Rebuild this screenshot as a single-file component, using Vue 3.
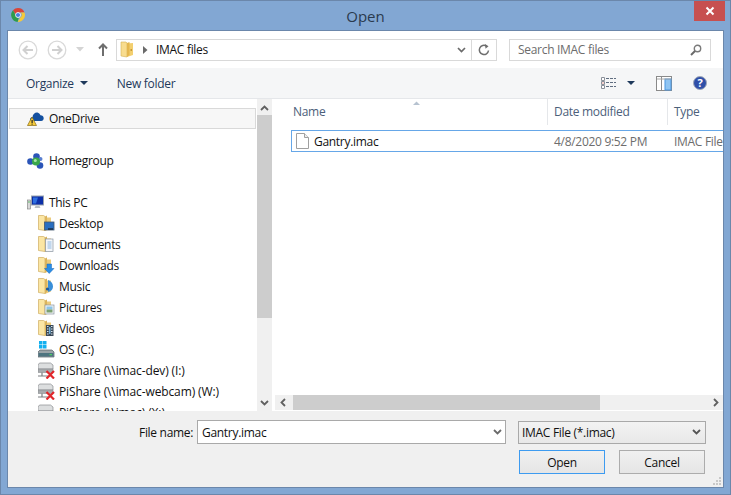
<template>
  <div class="window">
    <div class="titlebar">
      <svg class="chrome" width="16" height="16" viewBox="0 0 16 16">
        <path d="M8 1a7 7 0 0 1 6.500 4.400H8a2.700 2.700 0 0 0-2.600 2L3 3.300A7 7 0 0 1 8 1z" fill="#d8453a" />
        <path d="M14.500 5.400a7 7 0 0 1-6.900 9.600l3-4.800a2.800 2.800 0 0 0-.3-4.800z" fill="#f5c93a" />
        <path d="M7.600 15A7 7 0 0 1 3 3.300l2.600 4.800a2.700 2.700 0 0 0 3.200 2.500z" fill="#2f9c4c" />
        <circle cx="8" cy="8" r="2.700" fill="#fff" />
        <circle cx="8" cy="8" r="2.100" fill="#4a80e0" />
      </svg>
      <span class="title">Open</span>
      <div class="close">
        <svg width="10" height="10" viewBox="0 0 10 10"><path d="M1.500 1.500l7 7M8.500 1.500l-7 7" stroke="#fff" stroke-width="2" /></svg>
      </div>
    </div>

    <div class="client">
      <div class="navbar">
        <svg class="nav-btn" width="20" height="20" viewBox="0 0 20 20">
          <circle cx="10" cy="10" r="8.800" fill="none" stroke="#d9d9d9" stroke-width="1.300" />
          <path d="M15 10H6M9.500 6L5.500 10l4 4" fill="none" stroke="#d0d0d0" stroke-width="2" />
        </svg>
        <svg class="nav-btn" width="20" height="20" viewBox="0 0 20 20">
          <circle cx="10" cy="10" r="8.800" fill="none" stroke="#d9d9d9" stroke-width="1.300" />
          <path d="M5 10h9M10.500 6l4 4-4 4" fill="none" stroke="#d0d0d0" stroke-width="2" />
        </svg>
        <svg class="nav-caret" width="8" height="5" viewBox="0 0 8 5"><path d="M0 0h8L4 4.500z" fill="#d4d4d4" /></svg>
        <svg class="nav-up" width="10" height="13" viewBox="0 0 10 13">
          <path d="M5 13V2M1 5.500l4-4 4 4" fill="none" stroke="#6e6e6e" stroke-width="2" />
        </svg>
        <div class="address">
          <svg class="addr-folder" width="14" height="17" viewBox="0 0 14 17">
            <path d="M1 1h5l1 1v14l-6-1z" fill="#f8dc8e" stroke="#d5b256" stroke-width=".6" />
            <path d="M7 2.500l6-.5v12l-6 2z" fill="#f3cf6f" />
            <path d="M7 2l2.500-1v13L7 16z" fill="#e4b64e" />
            <rect x="10.500" y="8" width="1.500" height="2" fill="#c79a3a" />
          </svg>
          <svg class="addr-sep" width="5" height="8" viewBox="0 0 5 8"><path d="M0 0l4.500 4L0 8z" fill="#6a6a6a" /></svg>
          <span class="addr-text">IMAC files</span>
          <svg class="addr-drop" width="9" height="6" viewBox="0 0 9 6"><path d="M1 1l3.500 3.500L8 1" fill="none" stroke="#6a6a6a" stroke-width="1.700" /></svg>
          <div class="addr-refresh">
            <svg width="12" height="12" viewBox="0 0 12 12">
              <path d="M10.500 6.500A4.600 4.600 0 1 1 8.500 2.100" fill="none" stroke="#6e6e6e" stroke-width="1.500" />
              <path d="M7 0l3.500 2.200L7.500 4.800z" fill="#6e6e6e" />
            </svg>
          </div>
        </div>
        <div class="search">
          <span>Search IMAC files</span>
          <svg width="12" height="12" viewBox="0 0 12 12">
            <circle cx="7.500" cy="4.500" r="3.200" fill="#fff" stroke="#7a7a7a" stroke-width="1.400" />
            <path d="M5 7l-4 4" stroke="#6a6a6a" stroke-width="2" />
          </svg>
        </div>
      </div>

      <div class="toolbar">
        <span class="tool organize">Organize</span>
        <svg class="tool-caret" width="8" height="4" viewBox="0 0 8 4"><path d="M0 0h8L4 4z" fill="#1e395b" /></svg>
        <span class="tool newfolder">New folder</span>
        <div class="tool-right">
          <svg width="15" height="13" viewBox="0 0 15 13">
            <path d="M.5.500h3v3h-3zM.5 4.500h3v3h-3zM.5 8.500h3v3h-3z" fill="#fff" stroke="#8a9099" />
            <rect x="1.500" y="5.500" width="1" height="1" fill="#d6453a" />
            <path d="M5 1.500h10M5 5.500h10M5 9.500h10" stroke="#5f6d80" stroke-dasharray="3 1" />
          </svg>
          <svg class="view-caret" width="8" height="4" viewBox="0 0 8 4"><path d="M0 0h8L4 4z" fill="#1e395b" /></svg>
          <svg class="preview" width="16" height="15" viewBox="0 0 16 15">
            <rect x=".5" y=".5" width="15" height="14" fill="#fff" stroke="#8a8a8a" />
            <path d="M5.500 1v13" stroke="#8a8a8a" />
            <rect x="9" y="3" width="6" height="11" fill="#8fc4f2" stroke="#4a96e0" />
            <path d="M1 3h14" stroke="#a8a8a8" />
          </svg>
          <svg class="help" width="14" height="14" viewBox="0 0 14 14">
            <circle cx="7" cy="7" r="6.500" fill="#2f4fa8" stroke="#9fa8b8" />
            <text x="7" y="10.500" text-anchor="middle" class="help-mark">?</text>
          </svg>
        </div>
      </div>

      <div class="panes">
        <div class="tree">
          <div class="tree-list">
            <div class="row top selected">
              <svg class="ico" width="17" height="15" viewBox="0 0 17 15">
                <path d="M3 9.500c-.3-2 1-3.500 2.500-3.500C6 3 8.500 1 11 1.800c1.300.4 2 1.300 2.400 2.500 1.800-.1 3.300 1.200 3.300 3 0 1.500-1 2.700-2.500 2.700H4z" fill="#14509f" />
                <path d="M.5 14.500L5 6l4.500 8.500z" fill="#f6cc3c" stroke="#8a6a10" stroke-width=".7" />
                <rect x="4.500" y="9" width="1.200" height="3" fill="#222" />
                <rect x="4.500" y="12.600" width="1.200" height="1" fill="#222" />
              </svg>
              <span>OneDrive</span>
            </div>
            <div class="row top group-start">
              <svg class="ico" width="17" height="16" viewBox="0 0 17 16">
                <circle cx="3.500" cy="8.500" r="3.300" fill="#2b55b8" />
                <circle cx="9.500" cy="3.500" r="3.300" fill="#2b55b8" />
                <circle cx="13" cy="12.500" r="3.300" fill="#2b55b8" />
                <circle cx="13.500" cy="6" r="2" fill="#5a7fd0" />
                <circle cx="9" cy="8.500" r="4" fill="#3aa84a" />
                <circle cx="8.300" cy="7.500" r="1.500" fill="#a9e6a8" />
              </svg>
              <span>Homegroup</span>
            </div>
            <div class="row top group-start">
              <svg class="ico" width="17" height="15" viewBox="0 0 17 15">
                <rect x=".5" y="5" width="3" height="9" fill="#d8d8d8" stroke="#8a8a8a" stroke-width=".7" />
                <rect x="1.200" y="6.500" width="1.500" height="1" fill="#3ab04a" />
                <rect x="4.500" y="1" width="12" height="9" fill="#0c2fa8" stroke="#9aa3ad" />
                <path d="M6 2.500h5l-2 6H6z" fill="#2f6fe0" />
                <path d="M8.500 11h4l1 2h-6z" fill="#b8bec4" />
              </svg>
              <span>This PC</span>
            </div>
            <div v-for="item in items" :key="item.label" class="row sub" :class="{ share: item.kind === 'share' }">
              <svg class="ico" width="17" height="17" viewBox="0 0 17 17">
                <template v-if="item.kind !== 'drive' && item.kind !== 'share'">
                  <path d="M.5.500h5l1.500 1v14l-6.500-1z" fill="#fbe6a4" stroke="#cfae62" stroke-width=".7" />
                  <path d="M7 2.500h6v11l-6 2.500z" fill="#eccb7c" />
                  <path d="M7 1.500l2-1v13l-2 2.500z" fill="#dcb45c" />
                </template>
                <template v-if="item.kind === 'desktop'">
                  <rect x="6.500" y="7" width="9.500" height="8" fill="#2a6fc0" stroke="#44586e" stroke-width=".8" />
                  <path d="M10 14h5" stroke="#111" />
                </template>
                <template v-if="item.kind === 'docs'">
                  <rect x="7.500" y="3" width="7.500" height="12.500" fill="#f4f6fa" stroke="#8a94a0" stroke-width=".7" />
                  <path d="M9.500 6h4M9.500 8h4M9.500 10h4M9.500 12h4" stroke="#8fb8e0" />
                </template>
                <path v-if="item.kind === 'down'" d="M9 7h4.500v4.500H16L11.200 16.500 6.500 11.500H9z" fill="#2a8ee6" stroke="#1a66b8" stroke-width=".5" />
                <template v-if="item.kind === 'music'">
                  <path d="M10 2c3 1 5 3.500 5 6.500s-2 5-5 5.500z" fill="#3a8fd8" />
                  <circle cx="9.500" cy="11" r="1.600" fill="#1c5a9e" />
                </template>
                <template v-if="item.kind === 'pics'">
                  <rect x="7" y="6" width="9" height="9" fill="#f2f4f6" stroke="#8a94a0" stroke-width=".7" />
                  <rect x="8.500" y="7.500" width="6" height="3" fill="#8cc4e8" />
                  <rect x="8.500" y="10.500" width="6" height="3" fill="#7aa070" />
                </template>
                <template v-if="item.kind === 'video'">
                  <rect x="8" y="5" width="7.500" height="11" fill="#3c4a58" />
                  <path d="M9 6.500h1.500M9 9h1.500M9 11.500h1.500M9 14h1.500M13 6.500h1.500M13 9h1.500M13 11.500h1.500M13 14h1.500" stroke="#d8e4ee" />
                  <rect x="11" y="7" width="1.500" height="7" fill="#6fb0d8" />
                </template>
                <template v-if="item.kind === 'drive'">
                  <rect x="1" y="0" width="3.500" height="3.500" fill="#12b0ef" />
                  <rect x="5" y="0" width="3.500" height="3.500" fill="#12b0ef" />
                  <rect x="1" y="4" width="3.500" height="3.500" fill="#12b0ef" />
                  <rect x="5" y="4" width="3.500" height="3.500" fill="#12b0ef" />
                  <path d="M2 9h12l2 2v5H0v-5z" fill="#9aa4a8" stroke="#566066" stroke-width=".7" />
                  <rect x=".5" y="12" width="15" height="3.500" fill="#4e7480" />
                  <rect x="11.500" y="13" width="2.500" height="1.200" fill="#4cd060" />
                </template>
                <template v-if="item.kind === 'share'">
                  <path d="M1.500 1h11l2.500 2v4H0V3z" fill="#dcdedf" stroke="#8a8d90" stroke-width=".7" />
                  <rect x="0" y="7" width="15" height="3.500" fill="#a8abae" stroke="#7e8184" stroke-width=".5" />
                  <path d="M4 10.500v3.500H0M4 14h6" fill="none" stroke="#7c7f82" stroke-width="1.200" />
                  <path d="M8.500 9l7.500 7.500M16 9l-7.500 7.500" stroke="#e0262a" stroke-width="2.200" />
                </template>
              </svg>
              <span>{{ item.label }}</span>
            </div>
          </div>
          <div class="vscroll">
            <svg width="9" height="6" viewBox="0 0 9 6"><path d="M1 5l3.500-3.500L8 5" fill="none" stroke="#606060" stroke-width="1.800" /></svg>
            <div class="vthumb"></div>
            <div class="vspace"></div>
            <svg width="9" height="6" viewBox="0 0 9 6"><path d="M1 1l3.500 3.500L8 1" fill="none" stroke="#606060" stroke-width="1.800" /></svg>
          </div>
        </div>

        <div class="files">
          <div class="headers">
            <div class="col col-name">Name</div>
            <div class="col col-date">Date modified</div>
            <div class="col col-type">Type</div>
            <svg class="sort" width="7" height="4" viewBox="0 0 7 4"><path d="M0 4l3.500-3.500L7 4z" fill="#b6c2d0" /></svg>
          </div>
          <div class="file-row">
            <div class="file-name">
              <svg width="13" height="16" viewBox="0 0 13 16">
                <path d="M.5.500h8l4 4v11H.5z" fill="#fff" stroke="#a0a0a0" />
                <path d="M8.500.500v4h4" fill="#eee" stroke="#a0a0a0" />
              </svg>
              <span>Gantry.imac</span>
            </div>
            <div class="file-date">4/8/2020 9:52 PM</div>
            <div class="file-type">IMAC File</div>
          </div>
          <div class="hscroll">
            <svg width="6" height="9" viewBox="0 0 6 9"><path d="M5 1L1.500 4.500 5 8" fill="none" stroke="#606060" stroke-width="1.800" /></svg>
            <div class="hthumb"></div>
            <svg class="hright" width="6" height="9" viewBox="0 0 6 9"><path d="M1 1l3.500 3.500L1 8" fill="none" stroke="#606060" stroke-width="1.800" /></svg>
          </div>
        </div>
      </div>

      <div class="footer">
        <div class="name-line">
          <label class="name-label">File name:</label>
          <div class="name-input">
            <span>Gantry.imac</span>
            <svg width="9" height="6" viewBox="0 0 9 6"><path d="M1 1l3.500 3.500L8 1" fill="none" stroke="#6a6a6a" stroke-width="1.800" /></svg>
          </div>
          <div class="filter">
            <span>IMAC File (*.imac)</span>
            <svg width="9" height="6" viewBox="0 0 9 6"><path d="M1 1l3.500 3.500L8 1" fill="none" stroke="#555" stroke-width="1.800" /></svg>
          </div>
        </div>
        <div class="btn-line">
          <div class="btn primary">Open</div>
          <div class="btn">Cancel</div>
        </div>
        <svg class="grip" width="10" height="10" viewBox="0 0 10 10">
          <path d="M7 1h2v2H7zM4 4h2v2H4zM7 4h2v2H7zM1 7h2v2H1zM4 7h2v2H4zM7 7h2v2H7z" fill="#c8c8c8" />
        </svg>
      </div>
    </div>
  </div>
</template>

<script setup>
const items = [
  { label: 'Desktop', kind: 'desktop' },
  { label: 'Documents', kind: 'docs' },
  { label: 'Downloads', kind: 'down' },
  { label: 'Music', kind: 'music' },
  { label: 'Pictures', kind: 'pics' },
  { label: 'Videos', kind: 'video' },
  { label: 'OS (C:)', kind: 'drive' },
  { label: 'PiShare (\\\\imac-dev) (I:)', kind: 'share' },
  { label: 'PiShare (\\\\imac-webcam) (W:)', kind: 'share' },
  { label: 'PiShare (\\\\imac) (X:)', kind: 'share' }
]
</script>

<style>
html,
body {
  margin: 0;
  overflow: hidden;
}
</style>

<style scoped>
.window {
  width: 731px;
  height: 495px;
  box-sizing: border-box;
  background: #82a7d3;
  border: 1px solid #6b87ab;
  padding: 0 6px 6px;
  display: flex;
  flex-direction: column;
  font-family: "Open Sans", "Liberation Sans", sans-serif;
  font-size: 12px;
  letter-spacing: -0.3px;
  color: #111;
}

.titlebar {
  height: 29px;
  flex: none;
  position: relative;
  display: flex;
  align-items: center;
  justify-content: center;
}

.chrome {
  position: absolute;
  left: 3px;
  top: 6px;
}

.title {
  font-size: 15px;
  letter-spacing: 0;
  color: #2a3a4e;
}

.close {
  position: absolute;
  right: -1px;
  top: 0;
  width: 31px;
  height: 20px;
  background: #c75050;
  display: flex;
  align-items: center;
  justify-content: center;
}

.client {
  flex: 1;
  min-height: 0;
  border: 1px solid #6b87ab;
  background: #f0f0f0;
  display: flex;
  flex-direction: column;
}

.navbar {
  height: 37px;
  flex: none;
  background: #fff;
  display: flex;
  align-items: center;
  padding-left: 10px;
  box-sizing: border-box;
}

.nav-btn {
  margin-right: 9px;
}

.nav-up {
  margin-left: 14px;
}

.address {
  margin-left: 8px;
  width: 381px;
  height: 22px;
  box-sizing: border-box;
  border: 1px solid #d9d9d9;
  display: flex;
  align-items: center;
  padding-left: 3px;
}

.addr-sep {
  margin-left: 9px;
}

.addr-text {
  margin-left: 8px;
  flex: 1;
}

.addr-drop {
  margin-right: 5px;
}

.addr-refresh {
  width: 24px;
  height: 20px;
  border-left: 1px solid #d9d9d9;
  display: flex;
  align-items: center;
  justify-content: center;
}

.search {
  margin-left: 12px;
  width: 202px;
  height: 22px;
  box-sizing: border-box;
  border: 1px solid #d9d9d9;
  display: flex;
  align-items: center;
  justify-content: space-between;
  padding: 0 8px;
  color: #6d6d6d;
}

.toolbar {
  height: 31px;
  flex: none;
  box-sizing: border-box;
  background: #f5f6f7;
  border-bottom: 1px solid #e5e7ea;
  display: flex;
  align-items: center;
  padding-left: 18px;
  color: #1e395b;
}

.tool-caret {
  margin-left: 6px;
}

.newfolder {
  margin-left: 29px;
}

.tool-right {
  margin-left: auto;
  display: flex;
  align-items: center;
  padding-right: 16px;
}

.view-caret {
  margin-left: 11px;
}

.preview {
  margin-left: 21px;
}

.help {
  margin-left: 21px;
}

.help-mark {
  font-size: 11px;
  font-weight: 700;
  fill: #fff;
}

.panes {
  flex: 1;
  min-height: 0;
  background: #fff;
  display: flex;
}

.tree {
  width: 264px;
  flex: none;
  display: flex;
  overflow: hidden;
}

.tree-list {
  flex: 1;
  min-width: 0;
  padding: 9px 1px 0;
  overflow: hidden;
}

.row {
  height: 21px;
  box-sizing: border-box;
  display: flex;
  align-items: center;
  white-space: nowrap;
}

.row .ico {
  flex: none;
  margin-right: 4px;
}

.top {
  padding-left: 18px;
}

.top .ico {
  margin-right: 5px;
}

.sub {
  padding-left: 29px;
}

.share {
  letter-spacing: -0.12px;
}

.selected {
  border: 1px solid #d9d9d9;
  background: #f7f7f7;
  padding-left: 17px;
}

.group-start {
  margin-top: 21px;
}

.vscroll {
  width: 15px;
  flex: none;
  background: #f0f0f0;
  display: flex;
  flex-direction: column;
  align-items: center;
  padding: 6px 0 5px;
  box-sizing: border-box;
}

.vthumb {
  width: 15px;
  height: 203px;
  margin-top: 4px;
  background: #cdcdcd;
}

.vspace {
  flex: 1;
}

.files {
  flex: 1;
  min-width: 0;
  margin-left: 3px;
  display: flex;
  flex-direction: column;
  overflow: hidden;
}

.headers {
  height: 26px;
  flex: none;
  display: flex;
  position: relative;
  color: #4c607a;
}

.col {
  box-sizing: border-box;
  padding: 4px 0 0 6px;
  border-right: 1px solid #e5e7ea;
  white-space: nowrap;
}

.col-name {
  width: 273px;
  padding-left: 18px;
}

.col-date {
  width: 120px;
}

.col-type {
  flex: 1;
  border-right: none;
}

.sort {
  position: absolute;
  left: 138px;
  top: 2px;
}

.file-row {
  margin: 5px 0 0 16px;
  height: 22px;
  flex: none;
  box-sizing: border-box;
  border: 1px solid #66a7e8;
  border-right: none;
  display: flex;
  align-items: center;
  white-space: nowrap;
  color: #6d6d6d;
}

.file-name {
  width: 262px;
  flex: none;
  display: flex;
  align-items: center;
  gap: 5px;
  padding-left: 4px;
  box-sizing: border-box;
  color: #111;
}

.file-date {
  width: 120px;
  flex: none;
}

.hscroll {
  margin-top: auto;
  margin-bottom: 1px;
  height: 15px;
  flex: none;
  background: #f0f0f0;
  display: flex;
  align-items: center;
  padding-left: 5px;
}

.hthumb {
  width: 307px;
  height: 15px;
  margin-left: 7px;
  background: #cdcdcd;
}

.hright {
  margin-left: auto;
  margin-right: 4px;
}

.footer {
  height: 76px;
  flex: none;
  position: relative;
  box-sizing: border-box;
  padding-top: 9px;
}

.name-line {
  display: flex;
  align-items: center;
}

.name-label {
  margin-left: 131px;
  width: 58px;
  flex: none;
}

.name-input {
  width: 309px;
  height: 24px;
  box-sizing: border-box;
  border: 1px solid #a9a9a9;
  background: #fff;
  display: flex;
  align-items: center;
  justify-content: space-between;
  padding: 0 3px 0 4px;
}

.filter {
  margin-left: 12px;
  width: 188px;
  height: 23px;
  box-sizing: border-box;
  border: 1px solid #a9a9a9;
  background: linear-gradient(#f3f3f3, #e8e8e8);
  display: flex;
  align-items: center;
  justify-content: space-between;
  padding: 0 4px 0 3px;
}

.btn-line {
  display: flex;
  margin: 6px 0 0 511px;
  gap: 14px;
}

.btn {
  width: 86px;
  height: 24px;
  box-sizing: border-box;
  border: 1px solid #acacac;
  background: linear-gradient(#f0f0f0, #e5e5e5);
  display: flex;
  align-items: center;
  justify-content: center;
}

.primary {
  border-color: #3d9bf0;
}

.grip {
  position: absolute;
  right: 1px;
  bottom: 1px;
}
</style>
